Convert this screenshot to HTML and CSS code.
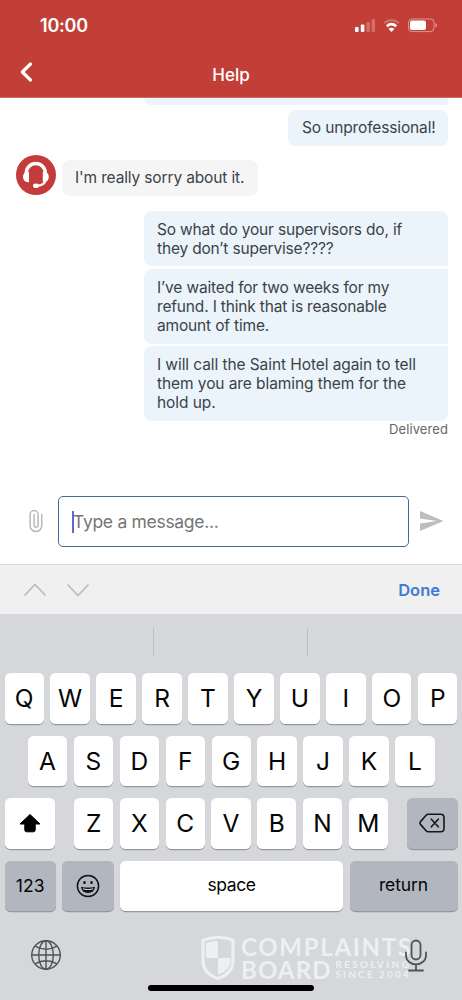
FILE: index.html
```html
<!DOCTYPE html>
<html lang="en">
<head>
<meta charset="utf-8">
<title>Help</title>
<link rel="stylesheet" href="styles.css">
</head>
<body>
<div class="phone">
  <header class="header">
    <div class="status">
      <span class="time">10:00</span>
      <svg class="status-icons" width="84" height="16" viewBox="0 0 84 16">
        <g fill="#fff"><rect x="1" y="9" width="3.6" height="5" rx="1"/><rect x="6.8" y="6.4" width="3.6" height="7.6" rx="1"/></g>
        <g fill="#fff" opacity=".25"><rect x="12.4" y="4" width="3.4" height="10" rx="1"/><rect x="17.6" y="1" width="3.4" height="13" rx="1"/></g>
        <g fill="none" stroke="#fff"><path d="M30.2 5.2q7.3-6 14.6 0" stroke-width="2.2" opacity=".25"/><path d="M32.8 8.2q4.700-4 9.400 0" stroke-width="2.600"/></g>
        <path d="M34.500 10.800q3-2.300 6 0l-3 3.200z" fill="#fff"/>
        <rect x="54.500" y="1" width="25.500" height="12.600" rx="3.600" fill="none" stroke="#fff" stroke-opacity=".45"/>
        <rect x="56" y="2.600" width="16" height="9.400" rx="2" fill="#fff"/>
        <path d="M81.500 5v4.500q1.500-.8 1.500-2.200T81.500 5z" fill="#fff" opacity=".5"/>
      </svg>
    </div>
    <div class="nav">
      <svg class="back" width="14" height="22" viewBox="0 0 14 22"><path d="M11.500 3L3.300 11l8.200 8" fill="none" stroke="#fff" stroke-width="3.200" stroke-linecap="round" stroke-linejoin="round"/></svg>
      <h1 class="title">Help</h1>
    </div>
  </header>

  <main class="chat">
    <div class="bubble sent clipped"></div>
    <div class="bubble sent short">So unprofessional!</div>
    <div class="agent-row">
      <svg class="avatar" width="40" height="40" viewBox="0 0 40 40">
        <circle cx="20" cy="20" r="20" fill="#c43b3b"/>
        <path d="M10.300 19v-1a9.500 9.500 0 0 1 19 0v1" fill="none" stroke="#fff" stroke-width="3.400"/>
        <path d="M13 17v10.300q-4.800.2-5.900-4.300-.6-4 2.600-6zM26.800 17v10.300q4.800.2 5.900-4.300.6-4-2.600-6z" fill="#fff"/>
        <path d="M29.600 26q-2 4.500-8.600 4.700" fill="none" stroke="#fff" stroke-width="2"/>
        <ellipse cx="20" cy="30.700" rx="3" ry="2.300" fill="#fff"/>
      </svg>
      <div class="bubble received">I'm really sorry about it.</div>
    </div>
    <div class="bubble sent first">So what do your supervisors do, if<br>they don’t supervise????</div>
    <div class="bubble sent middle">I’ve waited for two weeks for my<br>refund. I think that is reasonable<br>amount of time.</div>
    <div class="bubble sent last">I will call the Saint Hotel again to tell<br>them you are blaming them for the<br>hold up.</div>
    <div class="receipt">Delivered</div>
  </main>

  <div class="composer">
    <svg class="clip" width="16" height="24" viewBox="0 0 16 24"><path d="M13.700 5.500v11.300a5.800 5.800 0 0 1-11.600 0V5.600a4 4 0 0 1 8 0v10.700a2 2 0 0 1-4 0V5.500" fill="none" stroke="#b9b9b9" stroke-width="1.500" stroke-linecap="round"/></svg>
    <div class="field"><span class="caret"></span><span class="placeholder">Type a message...</span></div>
    <svg class="send" width="24" height="20" viewBox="0 0 24 20"><path d="M0 0l23.500 10L0 20v-7.500L17 10 0 7.500z" fill="#bdbdbd"/></svg>
  </div>

  <div class="accessory">
    <svg class="arrows" width="66" height="16" viewBox="0 0 66 16"><path d="M2 13l10-10.500L22 13M45 3l10 10.500L65 3" fill="none" stroke="#bcbcbe" stroke-width="1.700" stroke-linecap="round"/></svg>
    <span class="done">Done</span>
  </div>

  <section class="keyboard">
    <div class="suggestions"><span></span><span></span><span></span></div>
    <div class="keys">
      <div class="row"><b class="key">Q</b><b class="key">W</b><b class="key">E</b><b class="key">R</b><b class="key">T</b><b class="key">Y</b><b class="key">U</b><b class="key">I</b><b class="key">O</b><b class="key">P</b></div>
      <div class="row inset"><b class="key">A</b><b class="key">S</b><b class="key">D</b><b class="key">F</b><b class="key">G</b><b class="key">H</b><b class="key">J</b><b class="key">K</b><b class="key">L</b></div>
      <div class="row split">
        <b class="key wide"><svg width="22" height="20" viewBox="0 0 22 20"><path d="M11 1.500L21 11h-4.800v6q0 1.800-1.800 1.800H7.600q-1.800 0-1.800-1.800v-6H1z" fill="#000" stroke="#000" stroke-width="1" stroke-linejoin="round"/></svg></b>
        <div class="letters"><b class="key">Z</b><b class="key">X</b><b class="key">C</b><b class="key">V</b><b class="key">B</b><b class="key">N</b><b class="key">M</b></div>
        <b class="key wide gray"><svg width="26" height="20" viewBox="0 0 26 20"><path d="M9.300 1.200h12.400q3.300 0 3.300 3.300v11q0 3.300-3.300 3.300H9.300q-1.300 0-2.200-1L1.500 11.400q-1-1.400 0-2.800l5.600-6.400q.9-1 2.200-1zM12.300 6.200l7 7.600M19.300 6.200l-7 7.600" fill="none" stroke="#15171a" stroke-width="1.600" stroke-linecap="round"/></svg></b>
      </div>
      <div class="row">
        <b class="key fn gray">123</b>
        <b class="key fn gray"><svg width="24" height="24" viewBox="0 0 24 24"><circle cx="12" cy="12" r="10.600" fill="none" stroke="#111" stroke-width="1.500"/><ellipse cx="8.500" cy="8.500" rx="1.200" ry="1.600"/><ellipse cx="15.500" cy="8.500" rx="1.200" ry="1.600"/><path d="M5 12.700q7 1.800 14 0-.6 6.200-7 6.200t-7-6.200z" fill="#111"/><path d="M6.700 14.300q5.300 1.200 10.600 0l-.4 1.200q-4.900 1-9.800 0z" fill="#c4c8ce"/></svg></b>
        <b class="key space">space</b>
        <b class="key return gray">return</b>
      </div>
    </div>
    <div class="dock">
      <svg class="globe" width="32" height="32" viewBox="0 0 32 32"><g fill="none" stroke="#505357" stroke-width="1.400"><circle cx="16" cy="16" r="14.300"/><ellipse cx="16" cy="16" rx="7.300" ry="14.300"/><path d="M16 1.700v28.600M1.700 16h28.600M5 7.200q11 6 22 0M5 24.800q11-6 22 0"/></g></svg>
      <svg class="mic" width="24" height="34" viewBox="0 0 24 34"><g fill="none" stroke="#505357" stroke-width="1.800" stroke-linecap="round"><rect x="7.500" y="1.500" width="9" height="19" rx="4.500"/><path d="M2 13.500v3a10 8.800 0 0 0 20 0v-3M12 25.500v6M5 31.500h14"/></g></svg>
      <div class="watermark">
        <svg width="36" height="46" viewBox="0 0 36 46"><path d="M18 2.500q9 0 15 3v20q0 13-15 18-15-5-15-18v-20q6-3 15-3z" fill="none" stroke="#eeeff1" stroke-width="3.200"/><path d="M18 6v17H6V8q5-2 12-2zM18 23h12.500v3q0 9-12.500 14z" fill="#eeeff1"/></svg>
        <div class="brand">
          <div class="brand-top">COMPLAINTS</div>
          <div class="brand-bottom"><div class="board">BOARD</div><div class="tag"><div class="resolving">RESOLVING</div><div class="since">SINCE 2004</div></div></div>
        </div>
      </div>
    </div>
    <div class="home"></div>
  </section>
</div>
</body>
</html>
```
FILE: styles.css
```css
* { box-sizing: border-box; }
body { margin: 0; font-family: Inter, "Liberation Sans", sans-serif; background: #fff; }
svg { display: block; flex: none; }
.phone { width: 462px; height: 1000px; display: flex; flex-direction: column; overflow: hidden; white-space: nowrap; }

.header { height: 98px; flex: none; background: #c23f37; color: #fff; border-bottom: 1px solid #cf6b65; }
.status { height: 50px; display: flex; justify-content: space-between; padding: 0 24px 0 40px; }
.time { margin-top: 14px; font-size: 18px; line-height: 23px; font-weight: 600; letter-spacing: -.2px; }
.status-icons { margin-top: 18px; }
.nav { height: 48px; display: grid; grid-template-columns: 60px 1fr 60px; }
.back { margin: 10.500px 0 0 19px; }
.title { margin: 14px 0 0; text-align: center; font-size: 17px; line-height: 22px; font-weight: 500; }

.chat { height: 391px; flex: none; padding: 0 14px 0 16px; display: flex; flex-direction: column; align-items: flex-end; font-size: 15.500px; line-height: 19.200px; letter-spacing: -.14px; color: #3c4248; }
.bubble { flex: none; border-radius: 8px; }
.sent { width: 304px; padding: 8px 13px; background: #ebf4fa; }
.clipped { height: 7px; padding: 0; border-radius: 0 0 0 8px; }
.short { width: 160px; height: 36px; margin-top: 5px; padding: 8px 13px 0 14px; }
.agent-row { align-self: stretch; display: flex; gap: 6px; margin-top: 9px; height: 45px; }
.received { width: 196px; height: 36px; margin-top: 5px; padding: 8px 13px; background: #f5f5f5; }
.first { height: 55px; margin-top: 11px; padding-top: 9px; border-bottom-right-radius: 0; letter-spacing: -.18px; }
.middle { height: 75px; margin-top: 3px; border-radius: 8px 0 0 8px; padding-top: 9px; letter-spacing: -.17px; }
.last { height: 75px; margin-top: 2px; padding-top: 9px; border-top-right-radius: 0; letter-spacing: -.08px; }
.receipt { font-size: 13px; line-height: 16px; letter-spacing: .1px; color: #666; }

.composer { height: 76px; flex: none; display: flex; padding: 7px 0 0 28px; border-bottom: 1px solid #d9d9d9; }
.clip { margin-top: 13px; }
.field { width: 351px; flex: none; height: 51px; margin-left: 14px; border: 1.500px solid #426c99; border-radius: 5px; display: flex; align-items: center; padding-left: 13px; }
.caret { width: 2px; height: 22px; background: #6068cf; margin-right: -1px; }
.placeholder { font-size: 17.500px; line-height: 22px; letter-spacing: -.3px; color: #757575; }
.send { margin: 15px 0 0 10.500px; }

.accessory { height: 49px; flex: none; background: #f0f0f1; display: flex; justify-content: space-between; align-items: center; padding: 0 22px 0 23px; }
.arrows { margin-top: 1px; }
.done { font-size: 16.500px; font-weight: 600; color: #417bd6; }

.keyboard { height: 386px; flex: none; background: #d5d7db; }
.suggestions { height: 59px; padding-top: 14px; display: grid; grid-template-columns: 153px 154px 1fr; }
.suggestions span { height: 28px; border-right: 1px solid #bbbec2; }
.suggestions span:first-child { margin-right: -1px; }
.suggestions span:nth-child(2) { margin-right: -1px; }
.suggestions span:last-child { border: 0; }
.keys { display: flex; flex-direction: column; gap: 12px; padding: 0 4.500px; }
.row { height: 50.500px; display: flex; gap: 6.600px; }
.inset { padding: 0 22.900px 0 23.200px; }
.key { flex: 1 1 0; min-width: 0; display: flex; align-items: center; justify-content: center; height: 50.500px; background: #fff; border-radius: 5.500px; box-shadow: 0 1.200px 0 #94979b; color: #050505; font-size: 24.500px; font-weight: 400; }
.gray { background: #b2b7bf; }
.split { justify-content: space-between; }
.wide { flex: 0 0 50.500px; }
.letters { width: 314px; display: flex; gap: 6.600px; }
.fn { flex: 0 0 51.300px; font-size: 17.500px; }
.space { flex: 1 1 0; font-size: 17.500px; letter-spacing: -.4px; padding-bottom: 2px; }
.return { flex: 0 0 108px; font-size: 17.500px; padding-bottom: 2px; letter-spacing: -.1px; }
.dock { position: relative; height: 74px; display: flex; justify-content: space-between; padding: 28px 34px 0 30px; }
.mic { position: relative; z-index: 1; }
.watermark { position: absolute; left: 200px; top: 24px; display: flex; gap: 5px; color: #eeeff1; font-family: Lato, sans-serif; font-weight: 700; }
.brand-top { font-size: 24px; line-height: 23px; letter-spacing: 1.700px; }
.brand-bottom { display: flex; gap: 4px; }
.board { font-size: 24px; line-height: 23px; letter-spacing: 1.100px; }
.tag { font-size: 10px; line-height: 10px; padding-top: 1px; }
.resolving { letter-spacing: 2.300px; }
.since { letter-spacing: 2.100px; }
.home { width: 166px; height: 5.500px; margin: 0 auto; background: #000; border-radius: 3px; }
```
